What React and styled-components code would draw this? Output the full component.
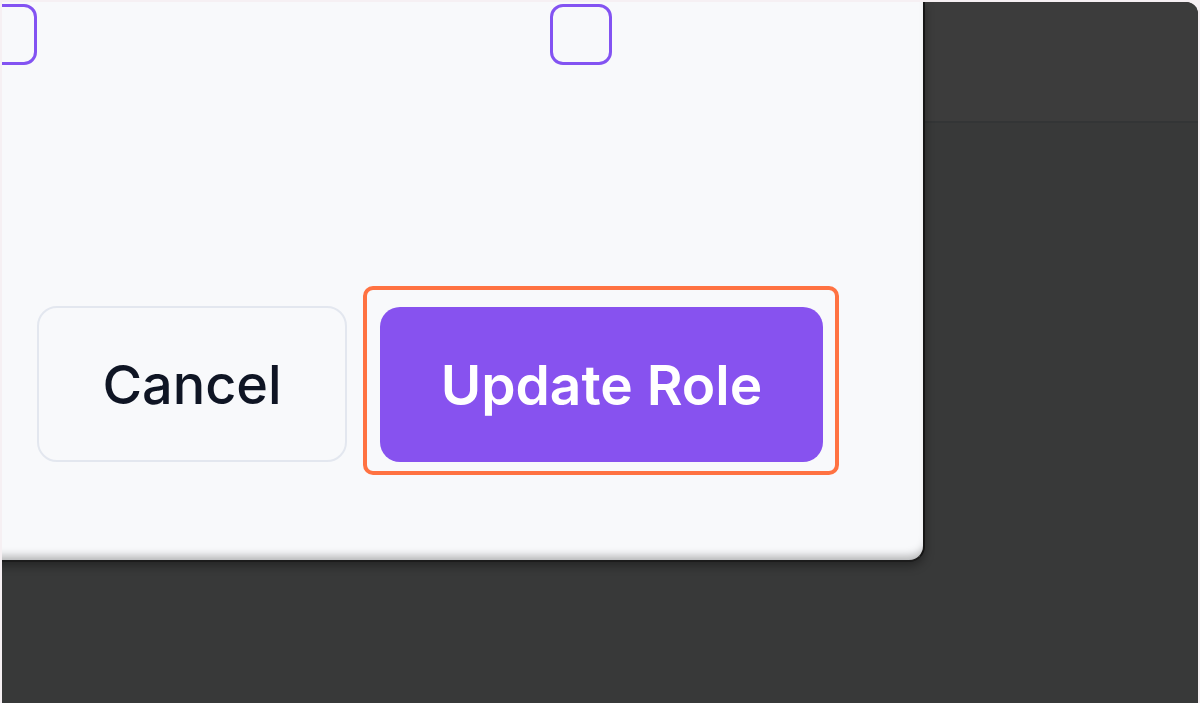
import React from "react";
import styled, { createGlobalStyle } from "styled-components";

const GlobalStyle = createGlobalStyle`
  html, body {
    margin: 0;
    padding: 0;
    background: #f6f0f3;
    font-family: Inter, "Noto Sans", "Liberation Sans", sans-serif;
  }
  #root {
    width: 1200px;
    height: 703px;
    overflow: hidden;
  }
`;

const Frame = styled.div`
  position: relative;
  margin: 2px 2px 0 2px;
  height: 701px;
  border-top-right-radius: 12px;
  background: #383939;
  overflow: hidden;
  display: flex;
  flex-direction: column;
`;

const PageHeader = styled.div`
  height: 119px;
  background: #3c3c3c;
  border-bottom: 2px solid #333536;
`;

const PageBody = styled.div`
  flex: 1;
  background: #383939;
`;

const Modal = styled.div`
  position: absolute;
  top: 0;
  left: -600px;
  width: 1521px;
  height: 558px;
  background: #f8f9fb;
  border-right: 2px solid #151515;
  border-bottom: 2px solid #1c1c1c;
  border-bottom-right-radius: 16px;
  box-shadow: inset 0 -9px 8px -5px rgba(0, 0, 0, 0.28),
    0 4px 10px rgba(0, 0, 0, 0.35);
  display: flex;
  flex-direction: column;
`;

const PermissionRow = styled.div`
  display: flex;
  gap: 513px;
  padding-left: 573px;
  margin-top: 2px;
`;

const Checkbox = styled.span`
  display: block;
  width: 62px;
  height: 61px;
  box-sizing: border-box;
  border: 3px solid #8353f2;
  border-radius: 13px;
  background: #f8f9fb;
`;

const Spacer = styled.div`
  flex: 1;
`;

const Footer = styled.div`
  display: flex;
  justify-content: flex-end;
  align-items: flex-start;
  gap: 16px;
  padding-right: 84px;
  padding-bottom: 85px;
`;

const CancelButton = styled.button`
  margin-top: 20px;
  width: 310px;
  height: 156px;
  box-sizing: border-box;
  border: 2px solid #e3e7ef;
  border-radius: 20px;
  background: #f8f9fb;
  color: #0f1524;
  font-family: Inter, "Noto Sans", sans-serif;
  font-size: 54px;
  font-weight: 500;
  cursor: pointer;
`;

const FocusRing = styled.div`
  border: 4px solid #ff7242;
  border-radius: 10px;
  padding: 17px 12px 9px 13px;
`;

const PrimaryButton = styled.button`
  display: block;
  width: 443px;
  height: 155px;
  border: none;
  border-radius: 20px;
  background: #8752ef;
  color: #ffffff;
  font-family: Inter, "Noto Sans", sans-serif;
  font-size: 55px;
  font-weight: 600;
  cursor: pointer;
`;

export default function App() {
  return (
    <>
      <GlobalStyle />
      <Frame>
        <PageHeader />
        <PageBody />
        <Modal>
          <PermissionRow>
            <Checkbox />
            <Checkbox />
          </PermissionRow>
          <Spacer />
          <Footer>
            <CancelButton>Cancel</CancelButton>
            <FocusRing>
              <PrimaryButton>Update Role</PrimaryButton>
            </FocusRing>
          </Footer>
        </Modal>
      </Frame>
    </>
  );
}
